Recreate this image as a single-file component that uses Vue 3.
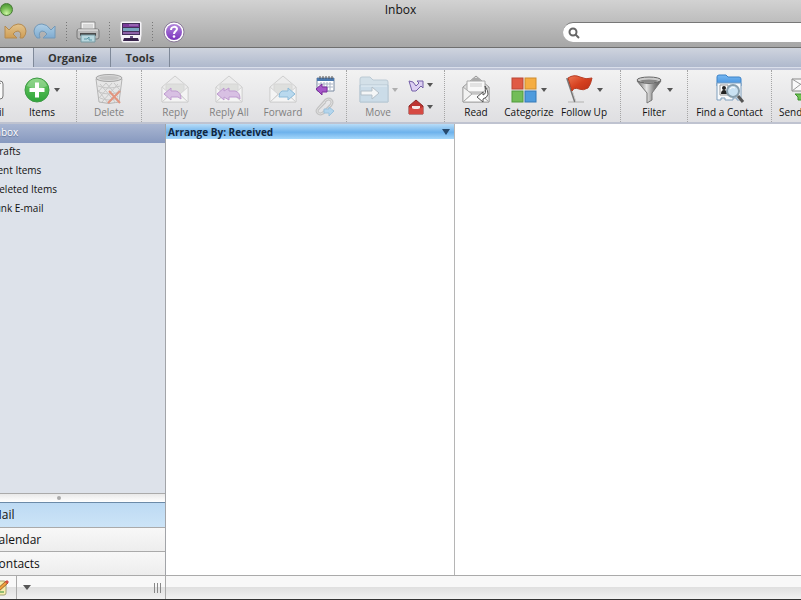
<script setup>
import { ref } from 'vue'

const tabs = ['Home', 'Organize', 'Tools']
const activeTab = ref('Home')
const folders = ['Inbox', 'Drafts', 'Sent Items', 'Deleted Items', 'Junk E-mail']
const activeFolder = ref('Inbox')
const views = ['Mail', 'Calendar', 'Contacts']
const activeView = ref('Mail')
const query = ref('')

const groups = [
  { key: 'new', items: [{ label: 'E-mail', icon: 'mail' }, { label: 'Items', icon: 'plus', menu: true }] },
  { key: 'delete', items: [{ label: 'Delete', icon: 'trash', off: true }] },
  {
    key: 'respond',
    items: [
      { label: 'Reply', icon: 'reply', off: true },
      { label: 'Reply All', icon: 'replyall', off: true },
      { label: 'Forward', icon: 'forward', off: true }
    ],
    small: [{ label: 'Meeting', icon: 'meeting' }, { label: 'Attachment', icon: 'clip' }]
  },
  {
    key: 'move',
    items: [{ label: 'Move', icon: 'move', off: true, menu: true }],
    small: [{ label: 'Rules', icon: 'rules', menu: true }, { label: 'Junk', icon: 'junk', menu: true }]
  },
  {
    key: 'tags',
    items: [
      { label: 'Read', icon: 'read' },
      { label: 'Categorize', icon: 'squares', menu: true },
      { label: 'Follow Up', icon: 'flag', menu: true }
    ]
  },
  { key: 'filter', items: [{ label: 'Filter', icon: 'funnel', menu: true }] },
  { key: 'find', items: [{ label: 'Find a Contact', icon: 'contact' }] },
  { key: 'send', items: [{ label: 'Send & Receive', icon: 'send' }] }
]
</script>

<template>
  <div class="window">
    <svg class="defs" aria-hidden="true">
      <defs>
        <linearGradient id="gGreen" x1="0" y1="0" x2="0" y2="1"><stop offset="0" stop-color="#6cc964" /><stop offset="1" stop-color="#2fa53a" /></linearGradient>
        <linearGradient id="gPurple" x1="0" y1="0" x2="0" y2="1"><stop offset="0" stop-color="#b287dc" /><stop offset="1" stop-color="#7b34bd" /></linearGradient>
        <linearGradient id="gGold" x1="0" y1="0" x2="0" y2="1"><stop offset="0" stop-color="#e3c48d" /><stop offset="1" stop-color="#cf9d54" /></linearGradient>
        <linearGradient id="gSky" x1="0" y1="0" x2="0" y2="1"><stop offset="0" stop-color="#afcfe6" /><stop offset="1" stop-color="#7fabd0" /></linearGradient>
        <linearGradient id="gMetal" x1="0" y1="0" x2="1" y2="0"><stop offset="0" stop-color="#666" /><stop offset=".4" stop-color="#e6e6e6" /><stop offset=".7" stop-color="#888" /><stop offset="1" stop-color="#555" /></linearGradient>
        <linearGradient id="gFolder" x1="0" y1="0" x2="0" y2="1"><stop offset="0" stop-color="#76b8f2" /><stop offset="1" stop-color="#3f8cdb" /></linearGradient>
        <linearGradient id="gFlag" x1="0" y1="0" x2="1" y2="1"><stop offset="0" stop-color="#ee7752" /><stop offset=".5" stop-color="#d5401f" /><stop offset="1" stop-color="#b92c14" /></linearGradient>
      </defs>
      <symbol id="i-undo" viewBox="0 0 24 18">
        <path d="M2 3v12h12l-4-4q2-3 5-3 4 1 2 7h3q3-3 3-7Q22 1 15 1 10 1 6 7z" fill="url(#gGold)" stroke="#b48a50" />
      </symbol>
      <symbol id="i-redo" viewBox="0 0 24 18">
        <path d="M22 3v12H10l4-4q-2-3-5-3-4 1-2 7H4Q1 12 1 8 2 1 9 1q5 0 9 6z" fill="url(#gSky)" stroke="#7399b8" />
      </symbol>
      <symbol id="i-print" viewBox="0 0 24 22">
        <path d="M5 1h14v9H5z" fill="#f1f1f1" stroke="#8b8b8b" /><path d="M7 4h10M7 6h10" stroke="#bbb" />
        <rect x="1" y="8" width="22" height="10" rx="2" fill="#b9b9b9" stroke="#777" />
        <path d="M2 9h20" stroke="#eee" /><path d="M4 12h16v3H4z" fill="#4b4b4b" />
        <path d="M5 14h14v7H5z" fill="#b8d7de" stroke="#7699a1" /><path d="M8 18h3l2-2v3h3" fill="none" stroke="#5a98a7" />
      </symbol>
      <symbol id="i-screen" viewBox="0 0 22 22">
        <path d="M2 1h18q1 0 1 1v12l-1 6q0 1-1 1H3q-1 0-1-1l-1-6V2q0-1 1-1z" fill="#f6f4f8" stroke="#f6f4f8" />
        <path d="M2 2h18v12H2z" fill="#43305a" /><path d="M3 3h16v3H3z" fill="#7b3a9b" /><path d="M3 7h16v3H3z" fill="#79a4bf" /><path d="M3 11h16v2H3z" fill="#8d62a8" />
        <path d="M9 4h9" stroke="#b28cc8" /><path d="M4 17h14l1 3H3z" fill="#38244c" /><path d="M10 15h3v2h-3z" fill="#6a5385" />
      </symbol>
      <symbol id="i-help" viewBox="0 0 22 22">
        <circle cx="11" cy="11" r="10" fill="#fff" stroke="#8a7a99" /><circle cx="11" cy="11" r="8" fill="url(#gPurple)" />
        <path d="M8 9c0-4 6-4 6-1 0 2-3 2-3 5" fill="none" stroke="#fff" stroke-width="2" /><circle cx="11" cy="15.500" r="1.300" fill="#fff" />
      </symbol>

      <symbol id="i-mail" viewBox="0 0 28 32"><rect x="1" y="7" width="26" height="18" rx="3" fill="#fafafa" stroke="#777" /><path d="M3 9l11 9 11-9" fill="none" stroke="#999" /></symbol>
      <symbol id="i-plus" viewBox="0 0 26 32">
        <circle cx="13" cy="16" r="12" fill="url(#gGreen)" stroke="#3f9a47" /><path d="M3 12a10.500 10.500 0 0 1 20 0q-10 5-20 0" fill="#fff" opacity=".25" />
        <path d="M13 8.500v15M5.500 16h15" stroke="#fff" stroke-width="4" />
      </symbol>
      <symbol id="i-trash" viewBox="0 0 30 32">
        <path d="M2 5l3 23q10 3 20 0l3-23z" fill="#e6e6e6" stroke="#b4b4b4" />
        <path d="M6 10l16 19M12 9l12 14M4 16l10 13M20 9l5 6M24 10L8 28M18 9L5 24M12 9l-8 9M26 15L15 29M4 12q11 4 22 0M5 18q10 4 20 0M6 24q9 4 18 0" stroke="#c6c6c6" fill="none" />
        <ellipse cx="15" cy="4" rx="13" ry="3.500" fill="#d8d8d8" stroke="#a5a5a5" /><ellipse cx="15" cy="4" rx="10" ry="2" fill="#c4c4c4" />
        <path d="M15 17l11 12M26 17L14 29" stroke="#e2957f" stroke-width="2" />
      </symbol>
      <symbol id="i-envelope" viewBox="0 0 28 28">
        <path d="M1 12L14 1l13 11v15H1z" fill="#ececec" stroke="#cfcfcf" /><path d="M5 9h18v10H5z" fill="#dedfdd" stroke="#d6d6d6" />
        <path d="M1 12l8 7-8 8zM27 12l-8 7 8 8z" fill="#f4f4f4" stroke="#d4d4d4" /><path d="M1 27l9-8h8l9 8z" fill="#f4f4f4" stroke="#d2d2d2" />
      </symbol>
      <symbol id="i-reply" viewBox="0 0 28 32"><use href="#i-envelope" y="1" width="28" height="28" /><path d="M3 20l7-6v3h5q5 1 5 8l-3-2h-7v3z" fill="#d8c0e3" stroke="#bf9bd0" /></symbol>
      <symbol id="i-replyall" viewBox="0 0 28 32"><use href="#i-envelope" y="1" width="28" height="28" /><path d="M2 20l7-6v3l5-3v3h6q5 1 5 8l-3-2h-8v3l-5-3v3z" fill="#d8c0e3" stroke="#bf9bd0" /></symbol>
      <symbol id="i-forward" viewBox="0 0 28 32"><use href="#i-envelope" y="1" width="28" height="28" /><path d="M26 20l-7-6v3h-6q-3 1-3 6h9v3z" fill="#b9d9ee" stroke="#8dbbd9" /></symbol>
      <symbol id="i-meeting" viewBox="0 0 20 20">
        <path d="M2 3h17v13H2z" fill="#fff" stroke="#7889a1" /><path d="M2 3h17v3H2z" fill="#4a78ae" />
        <path d="M5 1v3M8 1v3M11 1v3M14 1v3M17 1v3" stroke="#555" /><path d="M3 9h15M3 12h15M6 7v8M9 7v8M12 7v8M15 7v8" stroke="#a9b3c4" />
        <path d="M1 14l6-5v3h5v5H7v3z" fill="#a656c8" stroke="#7b2f9c" />
      </symbol>
      <symbol id="i-clip" viewBox="0 0 20 20">
        <path d="M3 12l8-9q3-2 5 0t0 5l-8 8q-3 2-5 0t0-4l7-7" fill="none" stroke="#c3c3c3" stroke-width="3" /><path d="M3 12l8-9q3-2 5 0t0 5l-8 8q-3 2-5 0t0-4l7-7" fill="none" stroke="#dedede" /><path d="M19 14l-5-4v2H9v4h5v3z" fill="#b3d5ed" stroke="#9cc2dc" />
      </symbol>
      <symbol id="i-move" viewBox="0 0 32 32">
        <path d="M2 28V5q0-2 2-2h8l3 3h13q2 0 2 2v20z" fill="#d3e0e8" stroke="#bccad4" /><path d="M2 28V11h28v17z" fill="#cbdce8" stroke="#b6c7d3" /><path d="M3 12h26" stroke="#e5eef4" />
        <path d="M3 17h11v-4l7 6-7 6v-4H3z" fill="#f4f6f7" stroke="#b3bfc8" />
      </symbol>
      <symbol id="i-rules" viewBox="0 0 16 16"><path d="M1 4l4 1 3 4 3-3-2-2h6v7l-2-2-5 5H4z" fill="#ddd0f2" stroke="#7460a8" /></symbol>
      <symbol id="i-junk" viewBox="0 0 16 16"><path d="M1 7l7-6 7 6v8H1z" fill="#bd3431" stroke="#8c2724" /><path d="M4 7h8v3H4z" fill="#f5e9e8" /><path d="M1 8l5 2h4l5-2v7H1z" fill="#d64a43" /></symbol>
      <symbol id="i-read" viewBox="0 0 28 32">
        <path d="M1 13L14 2l13 11v15H1z" fill="#ddd" stroke="#999" /><path d="M5 7h18v11H5z" fill="#f8f8f8" stroke="#aaa" /><path d="M11 4h6l2 3H9z" fill="#aaa" /><path d="M8 10h12M8 12h12" stroke="#ccc" />
        <path d="M1 13l9 7-9 8zM27 13l-8 7 8 8z" fill="#f2f2f2" stroke="#aaa" /><path d="M1 28l9-8h8l9 8z" fill="#fafafa" stroke="#aaa" />
        <path d="M23 12q7 10-2 13v3l-6-5 6-5v3q4-1 2-9" fill="#fff" stroke="#555" />
      </symbol>
      <symbol id="i-squares" viewBox="0 0 26 32">
        <rect x="1" y="4" width="11" height="11" fill="#e05a45" stroke="#b94635" /><rect x="14" y="4" width="11" height="11" fill="#f5ad42" stroke="#cf8c2d" />
        <rect x="1" y="17" width="11" height="11" fill="#72bd58" stroke="#519b3c" /><rect x="14" y="17" width="11" height="11" fill="#4e9bdd" stroke="#3579b6" />
      </symbol>
      <symbol id="i-flag" viewBox="0 0 28 32">
        <path d="M3 28h16" stroke="#ccc" stroke-width="2" /><path d="M2 4l8 24" stroke="#777" stroke-width="2" /><path d="M3 4l8 24" stroke="#ccc" />
        <path d="M3 4q6-4 12-1t12 1q-1 6-4 10-5 3-9 1-5-2-7 2z" fill="url(#gFlag)" stroke="#b63b22" />
      </symbol>
      <symbol id="i-funnel" viewBox="0 0 28 32">
        <path d="M2 7q12 5 24 0L17 19v7l-5 3V19z" fill="url(#gMetal)" stroke="#777" /><ellipse cx="14" cy="6" rx="12" ry="3" fill="#ccc" stroke="#666" /><ellipse cx="14" cy="7" rx="9" ry="1.500" fill="#888" />
      </symbol>
      <symbol id="i-contact" viewBox="0 0 30 32">
        <path d="M2 12V3q0-2 2-2h7l2 2h11q2 0 2 2v7z" fill="url(#gFolder)" stroke="#3c82c7" /><path d="M2 9h24v17h-4v-2h-4v2h-8v-2H6v2H2z" fill="#f8fafc" stroke="#7f9fbd" />
        <path d="M5 11h8v10H5z" fill="#fff" stroke="#999" /><circle cx="9" cy="14" r="2" fill="#222" /><path d="M6 20q0-4 3-4t3 4z" fill="#222" />
        <circle cx="18" cy="17" r="6" fill="#c3def1" fill-opacity=".9" stroke="#889fae" stroke-width="2" /><path d="M15 15q2-3 5-1" fill="none" stroke="#fff" /><path d="M23 22l5 6" stroke="#555" stroke-width="3" />
      </symbol>
      <symbol id="i-send" viewBox="0 0 28 32"><path d="M1 5h26v12H1z" fill="#fafafa" stroke="#888" /><path d="M1 5l13 8L27 5M1 17l9-7" fill="none" stroke="#999" /><path d="M4 20h12v-3l9 6-9 7v-4H7v-3z" fill="#6cc352" stroke="#3d8f2c" /></symbol>
      <symbol id="i-note" viewBox="0 0 20 18">
        <rect x="1" y="2" width="15" height="14" rx="2" fill="#f7efad" stroke="#a3a278" /><path d="M3 13h11" stroke="#91bd75" stroke-width="2" /><path d="M5 12L16 2l2 2L8 13z" fill="#f1a13d" stroke="#99652d" /><path d="M15 3l2-2 2 2-2 2z" fill="#d44f43" />
      </symbol>
    </svg>

    <header class="titlebar">
      <div class="title-row">
        <button class="light" aria-label="Zoom"></button>
        <h1>Inbox</h1>
      </div>
      <div class="quick">
        <button aria-label="Undo"><svg class="q24"><use href="#i-undo" /></svg></button>
        <button aria-label="Redo" class="redo"><svg class="q24"><use href="#i-redo" /></svg></button>
        <i class="dots"></i>
        <button aria-label="Print"><svg class="q24 tall"><use href="#i-print" /></svg></button>
        <i class="dots"></i>
        <button aria-label="My Day"><svg class="q24 tall"><use href="#i-screen" /></svg></button>
        <i class="dots"></i>
        <button aria-label="Help"><svg class="q24 tall"><use href="#i-help" /></svg></button>
        <label class="search">
          <svg viewBox="0 0 12 12"><circle cx="5" cy="5" r="3.500" fill="none" stroke="#666" stroke-width="2" /><path d="M7.500 7.500L11 11" stroke="#666" stroke-width="2" /></svg>
          <input v-model="query" type="search" aria-label="Search" />
        </label>
      </div>
    </header>

    <nav class="tabs">
      <button v-for="t in tabs" :key="t" :class="[t.toLowerCase(), { active: t === activeTab }]" @click="activeTab = t">{{ t }}</button>
    </nav>

    <div class="ribbon">
      <div v-for="g in groups" :key="g.key" class="group" :class="'g-' + g.key">
        <button v-for="b in g.items" :key="b.label" class="tool" :class="['t-' + b.icon, { off: b.off }]" :disabled="b.off">
          <span class="pic"><svg><use :href="'#i-' + b.icon" /></svg><i v-if="b.menu" class="caret"></i></span>
          <span class="label">{{ b.label }}</span>
        </button>
        <div v-if="g.small" class="stack">
          <button v-for="s in g.small" :key="s.label" :aria-label="s.label"><svg><use :href="'#i-' + s.icon" /></svg><i v-if="s.menu" class="caret"></i></button>
        </div>
      </div>
    </div>

    <main class="body">
      <aside class="side">
        <ul class="folders">
          <li v-for="f in folders" :key="f"><button :class="{ active: f === activeFolder }" @click="activeFolder = f">{{ f }}</button></li>
        </ul>
        <div class="splitter"><i></i></div>
        <ul class="views">
          <li v-for="v in views" :key="v"><button :class="{ active: v === activeView }" @click="activeView = v">{{ v }}</button></li>
        </ul>
      </aside>
      <section class="list">
        <button class="arrange"><span>Arrange By: Received</span><i class="caret big"></i></button>
      </section>
      <section class="reading"></section>
    </main>

    <footer class="status">
      <div class="status-left">
        <button class="note" aria-label="Notes"><svg><use href="#i-note" /></svg></button>
        <button class="more" aria-label="More views"><i class="caret big"></i></button>
        <span class="grip"><i></i><i></i><i></i></span>
      </div>
    </footer>
  </div>
</template>

<style>
body { margin: 0; }
</style>

<style scoped>
* { box-sizing: border-box; }
button { font: inherit; color: inherit; border: 0; padding: 0; margin: 0; background: none; }
svg { display: block; flex: none; }
ul { list-style: none; margin: 0; padding: 0; }
.window { display: flex; flex-direction: column; height: 100vh; overflow: hidden; font-family: "Open Sans", "Noto Sans", sans-serif; font-size: 10px; font-weight: 500; color: #111; background: #fff; }
.defs { position: absolute; width: 0; height: 0; }

.titlebar { flex: none; height: 48px; background: linear-gradient(#d2d2d2, #a6a6a6); border-bottom: 1px solid #6f6f6f; }
.title-row { display: grid; grid-template-columns: 1fr auto 1fr; align-items: center; height: 19px; }
.title-row h1 { margin: 0; font-size: 12px; line-height: 18px; font-weight: 500; }
.light { width: 13px; height: 13px; border-radius: 50%; border: 1px solid #467a35; background: radial-gradient(circle at 50% 85%, #cdf5a4, #76bd53 50%, #3f8a2d); }
.quick { display: flex; align-items: center; height: 26px; padding-left: 3px; }
.q24 { width: 24px; height: 18px; }
.q24.tall { height: 22px; }
.redo { margin-left: 6px; }
.dots { flex: none; width: 1px; height: 20px; margin: 0 9px; background: repeating-linear-gradient(#777 0 1px, transparent 1px 3px); }
.search { display: flex; align-items: center; flex: none; gap: 6px; width: 260px; height: 20px; margin-left: auto; margin-right: -22px; padding-left: 5px; border-radius: 10px; background: #fff; border-top: 1px solid #777; }
.search svg { width: 12px; height: 12px; }
.search input { flex: 1; min-width: 0; border: 0; padding: 0; outline: 0; background: none; font: inherit; }

.tabs { flex: none; display: flex; height: 20px; background: linear-gradient(#cfd4de, #afb9cd); border-bottom: 1px solid #d9deea; }
.tabs button { padding: 0 14px; font-size: 11px; font-weight: 700; line-height: 18px; color: #333; border-right: 1px solid #7f8999; }
.tabs .home { margin-left: -24px; padding-right: 12px; width: 58px; text-align: right; }
.tabs .organize { width: 77px; }
.tabs .tools { width: 59px; }
.tabs .active { background: linear-gradient(#dde1e9, #d0d6e3); }

.ribbon { flex: none; display: flex; height: 56px; overflow: hidden; border-top: 2px solid #bcc2d5; border-bottom: 2px solid #bfc3d0; background: linear-gradient(#f2f2f2, #dfdfe2); }
.group { display: flex; flex: none; justify-content: center; border-right: 1px dotted #a5a5a5; }
.tool { display: flex; flex-direction: column; align-items: center; flex: none; width: 54px; padding-top: 4px; white-space: nowrap; }
.pic { display: flex; align-items: center; gap: 4px; height: 32px; }
.pic svg { width: 28px; height: 32px; }
.label { font-size: 10px; line-height: 13px; }
.off .label { color: #808080; }
.off .caret { opacity: .4; }
.caret { flex: none; border: 3px solid transparent; border-top: 4px solid #555; border-bottom: 0; }
.caret.big { border-width: 6px 4px 0; border-top-color: #26496d; }
.g-new { margin-left: -34px; width: 111px; justify-content: flex-start; }
.t-mail { width: 38px; align-items: flex-end; }
.t-plus { width: 76px; }
.t-plus svg, .t-squares svg { width: 26px; }
.g-new .tool { flex-shrink: 0; }
.t-trash { width: 64px; }
.t-trash svg { width: 30px; }
.g-respond { padding: 0 6px; }
.t-move { width: 62px; }
.t-move svg { width: 32px; }
.t-move .pic { gap: 2px; }
.t-flag { width: 58px; }
.g-move { width: 98px; justify-content: flex-start; }
.g-tags { padding: 0 7px 0 4px; }
.t-squares { width: 52px; }
.g-filter { width: 67px; }
.g-find { width: 84px; }
.t-contact svg { width: 30px; }
.g-send { border-right: 0; padding-left: 7px; }
.t-send { width: 76px; align-items: flex-start; }
.t-send .pic { padding-left: 12px; }
.stack { display: flex; flex-direction: column; gap: 2px; padding-top: 5px; width: 30px; }
.g-move .stack { width: 22px; }
.stack button { display: flex; align-items: center; justify-content: center; gap: 3px; height: 20px; }
.stack svg { width: 20px; height: 20px; }
.g-move .stack svg { width: 16px; height: 16px; }

.body { flex: 1; min-height: 0; display: flex; }
.side { flex: none; display: flex; flex-direction: column; width: 166px; background: #dde2ea; border-right: 1px solid #a2a4a8; overflow: hidden; }
.folders { flex: 1; }
.folders button { display: block; width: 100%; height: 19px; padding-bottom: 3px; text-align: left; text-indent: -8px; line-height: 16px; font-size: 10px; white-space: nowrap; }
.folders .active { color: #fff; background: linear-gradient(#a9b6d2, #8799bf); text-shadow: 0 1px 1px #5d6e94; }
.splitter { display: flex; align-items: center; height: 9px; padding-left: 57px; background: linear-gradient(#e9e9e9, #fff); border-top: 1px solid #aaa; }
.splitter i { width: 4px; height: 4px; border-radius: 50%; background: #aaa; }
.views button { display: block; width: 100%; height: 24px; text-align: left; text-indent: -9px; line-height: 22px; font-size: 12px; border-top: 1px solid #aaa; background: linear-gradient(#f8f8f8, #ededed); }
.views .active { height: 25px; background: linear-gradient(#bddaf3, #cce4f7); border-top-color: #6b8aa8; }
.list { flex: none; width: 289px; border-right: 1px solid #b5b5b5; }
.arrange { display: flex; justify-content: space-between; align-items: center; width: 100%; height: 15px; padding: 0 4px 0 2px; font-weight: 700; font-size: 10px; line-height: 14px; color: #10263f; background: linear-gradient(#b8dcf7, #6db2ec 55%, #a6d8fb); }
.reading { flex: 1; }

.status { flex: none; height: 25px; background: linear-gradient(#f8f8f8 0 50%, #e0e0e0 50%, #f1f1f1); border-top: 1px solid #aaa; border-bottom: 1px solid #333; }
.status-left { display: flex; align-items: center; width: 166px; height: 100%; border-right: 1px solid #aaa; }
.note { width: 17px; height: 100%; border-right: 1px solid #aaa; overflow: hidden; }
.note svg { width: 20px; height: 18px; margin-left: -10px; }
.more { padding: 6px; }
.more .caret { display: block; border-top-width: 5px; border-top-color: #555; }
.grip { display: flex; gap: 2px; margin-left: auto; padding-right: 4px; }
.grip i { width: 1px; height: 10px; background: #888; }
</style>
